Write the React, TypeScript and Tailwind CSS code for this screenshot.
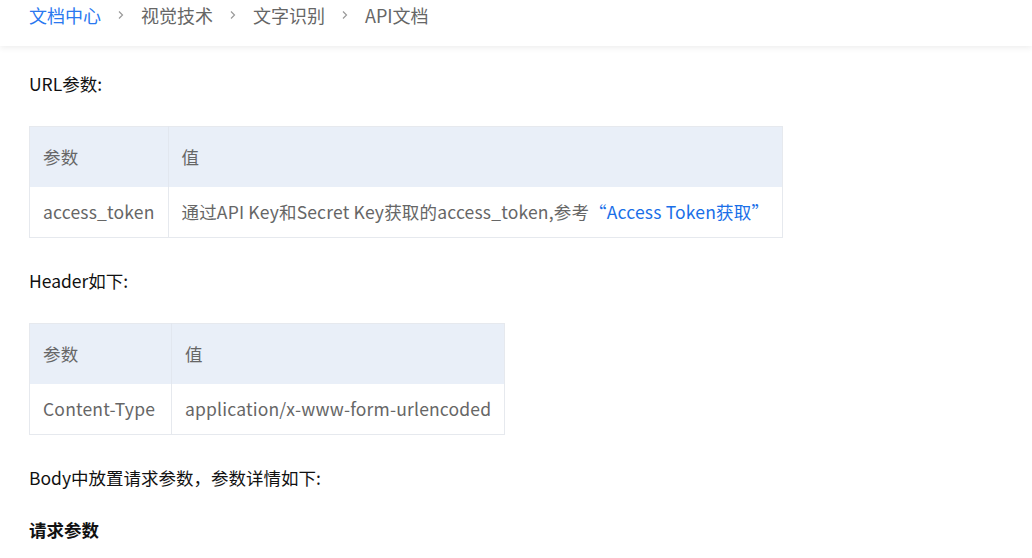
import React from "react";

const font = { fontFamily: '"Noto Sans CJK SC", "Noto Sans", sans-serif' };

function Sep() {
  return (
    <svg width="8" height="10" viewBox="0 0 8 10" className="mx-[16px]">
      <path d="M2 1.5 L5.5 5 L2 8.5" fill="none" stroke="#9a9a9a" strokeWidth="1.2" />
    </svg>
  );
}

function Table({ col, rows }: { col: string; rows: [string, React.ReactNode][] }) {
  return (
    <table className="border-collapse border border-[#e6e9ee] text-[17.5px] text-[#666] tracking-[0.18px]">
      <thead>
        <tr className="bg-[#e9eff8] h-[60px]">
          <th className={`${col} text-left font-normal px-[13px] border-r border-[#e2e7ef]`}>参数</th>
          <th className="text-left font-normal px-[13px]">值</th>
        </tr>
      </thead>
      <tbody>
        {rows.map(([a, b], i) => (
          <tr key={i} className="h-[51px]">
            <td className="px-[13px] border-r border-[#e6e9ee] whitespace-nowrap">{a}</td>
            <td className="px-[13px] whitespace-nowrap">{b}</td>
          </tr>
        ))}
      </tbody>
    </table>
  );
}

export default function App() {
  return (
    <div className="w-[1032px] h-[558px] bg-white overflow-hidden" style={font}>
      <div className="h-[46px] flex items-center pl-[29px] pb-[16px] shadow-[0_2px_6px_rgba(0,0,0,0.07)] relative text-[18px]">
        <span className="text-[#2a78f0]">文档中心</span>
        <Sep />
        <span className="text-[#666]">视觉技术</span>
        <Sep />
        <span className="text-[#666]">文字识别</span>
        <Sep />
        <span className="text-[#666]">API文档</span>
      </div>
      <div className="pl-[29px] text-[17.5px] text-[#111]">
        <p className="mt-[25px] leading-[26px]">URL参数:</p>
        <div className="mt-[29px]">
          <Table
            col="w-[136px]"
            rows={[
              [
                "access_token",
                <span>
                  通过API Key和Secret Key获取的access_token,参考
                  <span className="text-[#1a6fe8]">“Access Token获取”</span>
                </span>,
              ],
            ]}
          />
        </div>
        <p className="mt-[30px] leading-[26px]">Header如下:</p>
        <div className="mt-[29px]">
          <Table col="w-[142px]" rows={[["Content-Type", "application/x-www-form-urlencoded"]]} />
        </div>
        <p className="mt-[30px] leading-[26px]">Body中放置请求参数，参数详情如下:</p>
        <p className="mt-[26px] leading-[26px] font-bold">请求参数</p>
      </div>
    </div>
  );
}
